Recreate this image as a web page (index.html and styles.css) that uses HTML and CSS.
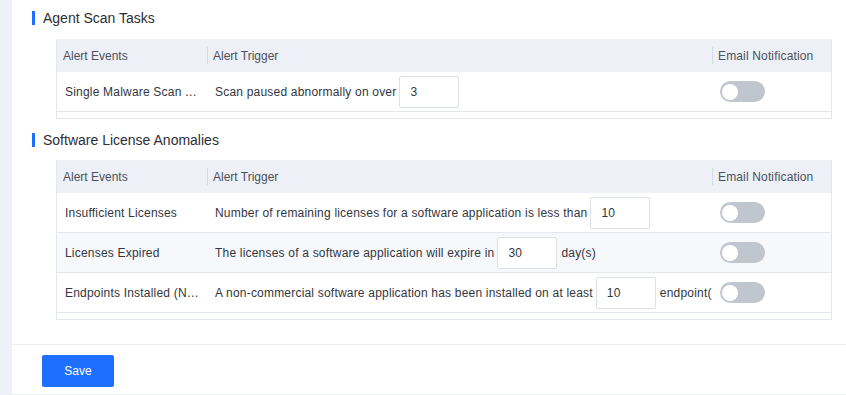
FILE: index.html
```html
<!DOCTYPE html>
<html lang="en">
<head>
<meta charset="utf-8">
<title>Alert Settings</title>
<link rel="stylesheet" href="styles.css">
</head>
<body>
<div class="page">
  <div class="strip"></div>
  <div class="panel">
    <div class="content">
      <div class="section-title first"><span class="bar"></span><span class="title-text">Agent Scan Tasks</span></div>
      <div class="table">
        <div class="row head">
          <div class="cell c1">Alert Events</div>
          <div class="cell c2 sep">Alert Trigger</div>
          <div class="cell c3 sep">Email Notification</div>
        </div>
        <div class="row">
          <div class="cell c1"><span class="ellip">Single Malware Scan Task Paused</span></div>
          <div class="cell c2"><span class="trig">Scan paused abnormally on over<input class="num" value="3"></span></div>
          <div class="cell c3"><span class="switch"><span class="knob"></span></span></div>
        </div>
        <div class="filler"></div>
      </div>

      <div class="section-title"><span class="bar"></span><span class="title-text">Software License Anomalies</span></div>
      <div class="table t2">
        <div class="row head">
          <div class="cell c1">Alert Events</div>
          <div class="cell c2 sep">Alert Trigger</div>
          <div class="cell c3 sep">Email Notification</div>
        </div>
        <div class="row">
          <div class="cell c1"><span class="ellip">Insufficient Licenses</span></div>
          <div class="cell c2"><span class="trig">Number of remaining licenses for a software application is less than<input class="num" value="10"></span></div>
          <div class="cell c3"><span class="switch"><span class="knob"></span></span></div>
        </div>
        <div class="row hover">
          <div class="cell c1"><span class="ellip">Licenses Expired</span></div>
          <div class="cell c2"><span class="trig">The licenses of a software application will expire in<input class="num" value="30">day(s)</span></div>
          <div class="cell c3"><span class="switch"><span class="knob"></span></span></div>
        </div>
        <div class="row">
          <div class="cell c1"><span class="ellip">Endpoints Installed (Non-commercial)</span></div>
          <div class="cell c2"><span class="trig">A non-commercial software application has been installed on at least<input class="num" value="10">endpoint(s)</span></div>
          <div class="cell c3"><span class="switch"><span class="knob"></span></span></div>
        </div>
        <div class="filler"></div>
      </div>
    </div>
    <div class="footer">
      <button class="save">Save</button>
    </div>
  </div>
</div>
</body>
</html>
```

FILE: styles.css
```css
* { box-sizing: border-box; }
html, body { margin: 0; padding: 0; }
body {
  font-family: "Liberation Sans", Arial, sans-serif;
  font-size: 12px;
  color: #333640;
  background: #ffffff;
  overflow: hidden;
}
.page {
  display: flex;
  width: 846px;
  height: 395px;
}
.strip {
  width: 12px;
  flex: none;
  background: #edf0f7;
}
.panel {
  flex: 1;
  display: flex;
  flex-direction: column;
  background: #fff;
}
.content {
  padding: 11px 14px 24px 0;
}
.section-title {
  display: flex;
  align-items: center;
  height: 14px;
  margin: 14px 0 14px 20px;
}
.section-title.first { margin-top: 0; }
.section-title + .t2 { margin-top: -1px; }
.bar {
  width: 3px;
  height: 14px;
  background: #1e6fff;
}
.title-text {
  margin-left: 8px;
  font-size: 14px;
  line-height: 14px;
  color: #2b2e36;
}
.table {
  margin-left: 44px;
  width: 776px;
  border-left: 1px solid #e4e7ee;
  border-right: 1px solid #e4e7ee;
  border-bottom: 1px solid #e4e7ee;
}
.row {
  display: grid;
  grid-template-columns: 150px 505px 1fr;
  height: 40px;
  border-bottom: 1px solid #e4e7ee;
  background: #fff;
  letter-spacing: 0.2px;
}
.row.hover { background: #f7f8fc; }
.row.head {
  height: 33px;
  background: #edf0f7;
  border-bottom: none;
  color: #4b505c;
  letter-spacing: 0;
}
.row.head .c3 { letter-spacing: 0.15px; }
.cell {
  position: relative;
  display: flex;
  align-items: center;
  padding: 0 8px;
  min-width: 0;
  white-space: nowrap;
}
.row.head .cell { padding: 0 6px; }
.cell.c2 { padding-right: 0; }
.sep::before {
  content: "";
  position: absolute;
  left: 0;
  top: 8px;
  width: 1px;
  height: 17px;
  background: #d8dbe3;
}
.ellip {
  display: block;
  overflow: hidden;
  text-overflow: ellipsis;
  white-space: nowrap;
  max-width: 100%;
}
.trig {
  display: flex;
  align-items: center;
  overflow: hidden;
  width: 100%;
  white-space: nowrap;
}
.num {
  flex: none;
  width: 60px;
  height: 32px;
  margin: 0 4px 0 3px;
  padding: 0 0 0 10px;
  border: 1px solid #dcdfe6;
  border-radius: 2px;
  font-family: inherit;
  font-size: 12px;
  letter-spacing: 0.2px;
  color: #333640;
  background: #fff;
  outline: none;
}
.switch {
  display: flex;
  align-items: center;
  width: 45px;
  height: 21px;
  border-radius: 11px;
  background: #c1c5ce;
  padding: 0 2px;
}
.knob {
  width: 16px;
  height: 16px;
  border-radius: 50%;
  background: #fff;
}
.filler {
  height: 6px;
}
.footer {
  border-top: 1px solid #eceef3;
  border-bottom: 1px solid #eceef3;
  padding: 10px 30px 6px;
  height: 51px;
}
.save {
  display: block;
  width: 72px;
  height: 32px;
  border: none;
  border-radius: 2px;
  background: #1e6fff;
  color: #fff;
  font-family: inherit;
  font-size: 12px;
  cursor: pointer;
}
```
